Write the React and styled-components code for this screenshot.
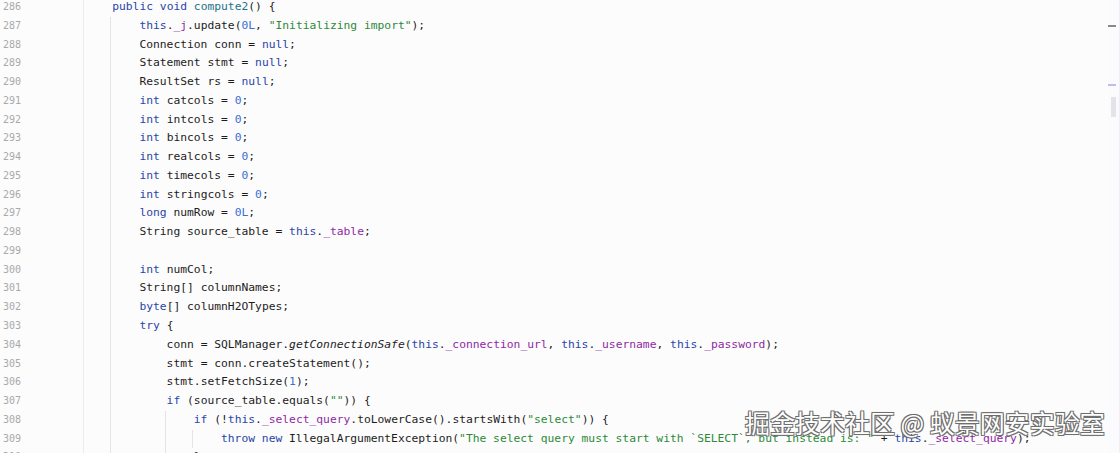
import React from "react";
import styled, { createGlobalStyle } from "styled-components";

const LINES = [
  [286, 4, "public void compute2() {"],
  [287, 8, 'this._j.update(0L, "Initializing import");'],
  [288, 8, "Connection conn = null;"],
  [289, 8, "Statement stmt = null;"],
  [290, 8, "ResultSet rs = null;"],
  [291, 8, "int catcols = 0;"],
  [292, 8, "int intcols = 0;"],
  [293, 8, "int bincols = 0;"],
  [294, 8, "int realcols = 0;"],
  [295, 8, "int timecols = 0;"],
  [296, 8, "int stringcols = 0;"],
  [297, 8, "long numRow = 0L;"],
  [298, 8, "String source_table = this._table;"],
  [299, 8, ""],
  [300, 8, "int numCol;"],
  [301, 8, "String[] columnNames;"],
  [302, 8, "byte[] columnH2OTypes;"],
  [303, 8, "try {"],
  [304, 12, "conn = SQLManager.getConnectionSafe(this._connection_url, this._username, this._password);"],
  [305, 12, "stmt = conn.createStatement();"],
  [306, 12, "stmt.setFetchSize(1);"],
  [307, 12, 'if (source_table.equals("")) {'],
  [308, 16, 'if (!this._select_query.toLowerCase().startsWith("select")) {'],
  [309, 20, 'throw new IllegalArgumentException("The select query must start with `SELECT`, but instead is: " + this._select_query);'],
  [310, 16, "}"],
];

const KEYWORDS = new Set([
  "public", "void", "int", "long", "byte", "this", "null",
  "try", "if", "new", "throw",
]);

const tokenize = (src) => {
  const re = /("[^"]*")|([A-Za-z_]\w*)|(\d+L?)|(\s+)|(.)/g;
  const out = [];
  let m;
  while ((m = re.exec(src))) {
    if (m[1]) out.push({ kind: "str", text: m[1] });
    else if (m[2]) {
      const w = m[2];
      let kind = "plain";
      if (KEYWORDS.has(w)) kind = "kw";
      else if (w.startsWith("_")) kind = "field";
      else if (w === "compute2") kind = "decl";
      else if (w === "getConnectionSafe") kind = "static";
      out.push({ kind, text: w });
    } else if (m[3]) out.push({ kind: "num", text: m[3] });
    else out.push({ kind: "plain", text: m[0] });
  }
  return out;
};

// which indentation columns show a guide on a given line
const guidesFor = (num, indent) => {
  const g = [];
  if (indent >= 8) g.push(1);
  if (num >= 308) g.push(3);
  if (num === 309) g.push(4);
  return g;
};

const GlobalStyle = createGlobalStyle`
  html, body {
    margin: 0;
    padding: 0;
    background: #fcfcfd;
    overflow: hidden;
  }
`;

const Editor = styled.div`
  position: relative;
  width: 1120px;
  height: 453px;
  overflow: hidden;
  background: #fcfcfd;
  display: flex;
`;

const CodeArea = styled.div`
  flex: 1;
  display: flex;
  flex-direction: column;
  margin-top: -2px;
`;

const Row = styled.div`
  display: flex;
  height: 18.78px;
  line-height: 18.78px;
`;

const LineNo = styled.div`
  width: 80px;
  flex: none;
  padding-left: 3px;
  border-right: 1px solid #ececef;
  font-family: "DejaVu Sans Mono", monospace;
  font-size: 10px;
  color: #a9a9a9;
`;

const Code = styled.div`
  display: flex;
  padding-left: 1px;
  white-space: pre;
  font-family: "DejaVu Sans Mono", monospace;
  font-size: 11.3px;
  color: #1f1f1f;
`;

const Indent = styled.span`
  position: relative;
  display: inline-block;
  width: 4ch;
  height: 100%;

  &::before {
    content: "";
    display: ${(p) => (p.$guide ? "block" : "none")};
    position: absolute;
    left: -2px;
    top: 0;
    bottom: 0;
    width: 1px;
    background: #e4e4e8;
  }
`;

const COLORS = {
  plain: "#1c1c1c",
  kw: "#2a45a8",
  num: "#3a70d6",
  str: "#2c8a38",
  field: "#8e2aa3",
  decl: "#1f7386",
  static: "#1c1c1c",
};

const Tok = styled.span`
  color: ${(p) => COLORS[p.$kind]};
  font-style: ${(p) => (p.$kind === "static" ? "italic" : "normal")};
`;

const ScrollBar = styled.div`
  width: 8px;
  flex: none;
  display: flex;
  flex-direction: column;
  align-items: flex-end;
  padding-right: 3px;
  background: #fbfafc;
  border-right: 1px solid #f0eff3;
`;

const Mark = styled.div`
  width: 8px;
  height: 2px;
  margin-top: ${(p) => p.$top}px;
  background: ${(p) => p.$color};
`;

const Thumb = styled.div`
  width: 5px;
  height: 20px;
  margin-top: 11px;
  background: #e4e3e7;
`;

const Watermark = styled.div`
  position: absolute;
  left: 745px;
  top: 405px;
  white-space: nowrap;
  font-family: "Noto Sans CJK SC", sans-serif;
  font-size: 25px;
  line-height: 34px;
  color: #ffffff;
  text-shadow:
    -1px -1px 0 #6e6e6e,
    1px -1px 0 #6e6e6e,
    -1px 1px 0 #6e6e6e,
    1px 1px 0 #6e6e6e,
    0 0 2px rgba(0, 0, 0, 0.4);
`;

const Line = ({ num, indent, text }) => {
  const levels = indent / 4;
  const guides = guidesFor(num, indent);
  return (
    <Row>
      <LineNo>{num}</LineNo>
      <Code>
        {Array.from({ length: levels }, (_, i) => (
          <Indent key={i} $guide={guides.includes(i)} />
        ))}
        <span>
          {tokenize(text).map((t, i) => (
            <Tok key={i} $kind={t.kind}>
              {t.text}
            </Tok>
          ))}
        </span>
      </Code>
    </Row>
  );
};

export default function App() {
  return (
    <>
      <GlobalStyle />
      <Editor>
        <CodeArea>
          {LINES.map(([num, indent, text]) => (
            <Line key={num} num={num} indent={indent} text={text} />
          ))}
        </CodeArea>
        <ScrollBar>
          <Mark $top={25} $color="#8a8a8e" />
          <Mark $top={57} $color="#c9b8ef" />
          <Thumb />
        </ScrollBar>
        <Watermark>掘金技术社区 @ 蚁景网安实验室</Watermark>
      </Editor>
    </>
  );
}
